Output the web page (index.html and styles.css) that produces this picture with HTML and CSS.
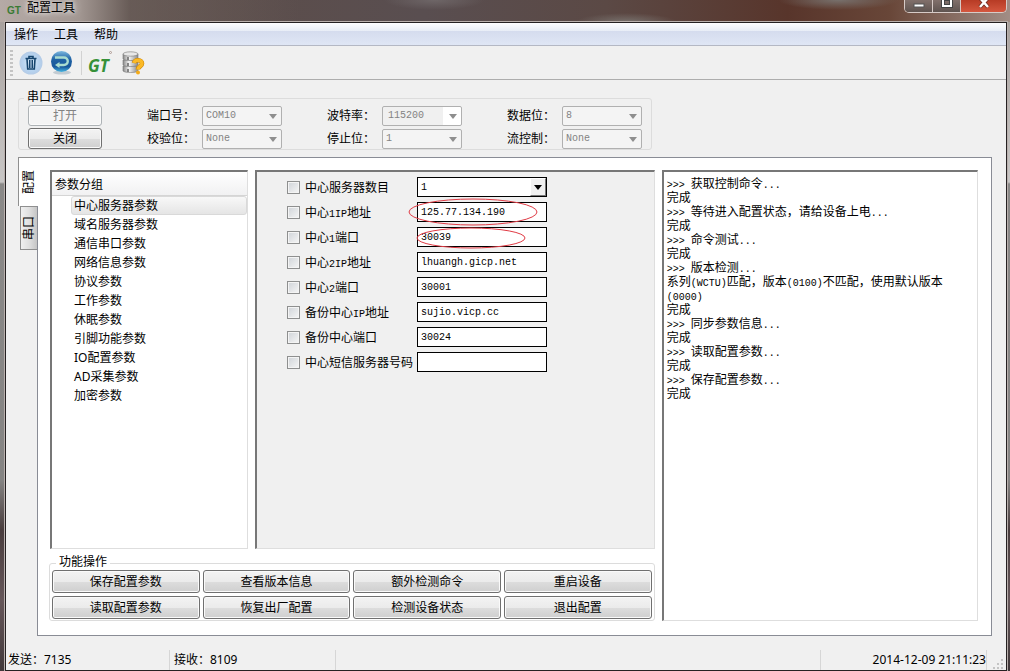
FILE: index.html
```html
<!DOCTYPE html>
<html lang="zh-CN">
<head>
<meta charset="utf-8">
<title>配置工具</title>
<link rel="stylesheet" href="styles.css">
</head>
<body>
<div class="window">
  <header class="titlebar">
    <span class="app-mark">GT</span>
    <h1 class="title">配置工具</h1>
    <div class="controls">
      <button class="control" type="button" aria-label="最小化"><svg width="14" height="12" viewBox="0 0 14 12"><rect x="2" y="4" width="10" height="3" fill="#fff" stroke="#555"/></svg></button>
      <button class="control" type="button" aria-label="最大化"><svg width="14" height="12" viewBox="0 0 14 12"><rect x="3" y="-1" width="8" height="7" fill="none" stroke="#444" stroke-width="4"/><rect x="3" y="-1" width="8" height="7" fill="none" stroke="#fff" stroke-width="2"/></svg></button>
      <button class="control close" type="button" aria-label="关闭窗口"><svg width="14" height="12" viewBox="0 0 14 12"><path d="M3-2l8 9M11-2L3 7" stroke="#6a2a22" stroke-width="4"/><path d="M3-2l8 9M11-2L3 7" stroke="#fff" stroke-width="2.5"/></svg></button>
    </div>
  </header>
  <div class="client">
    <nav class="menubar">
      <button class="menu" type="button">操作</button>
      <button class="menu" type="button">工具</button>
      <button class="menu" type="button">帮助</button>
    </nav>
    <div class="toolbar">
      <span class="grip"></span>
      <button class="tool" type="button" aria-label="清空">
        <svg width="24" height="24" viewBox="0 0 24 24"><defs><radialGradient id="pale"><stop offset="0" stop-color="#d9ebfa"/><stop offset=".7" stop-color="#b7d3ef"/><stop offset="1" stop-color="#b4cbe6"/></radialGradient></defs><circle cx="12" cy="12" r="11.500" fill="url(#pale)"/><path d="M6.500 7.500h11M10 7V5.500h4V7M8 8l.7 10h6.600L16 8" fill="none" stroke="#16456e" stroke-width="1.600"/><path d="M10.500 9v8M12 9v8M13.500 9v8" stroke="#16456e"/></svg>
      </button>
      <button class="tool" type="button" aria-label="返回">
        <svg width="24" height="24" viewBox="0 0 24 24"><defs><linearGradient id="ball" x2="0" y2="1"><stop offset="0" stop-color="#7db9e0"/><stop offset=".4" stop-color="#1f62a4"/><stop offset=".75" stop-color="#17579b"/><stop offset="1" stop-color="#49b8e4"/></linearGradient></defs><ellipse cx="12" cy="21.500" rx="9" ry="2" fill="#c2cbd2"/><circle cx="11.500" cy="10.500" r="10.500" fill="url(#ball)"/><path d="M5 6.500h9a3.500 3.500 0 0 1 0 7.500H9" fill="none" stroke="#a9dcd0" stroke-width="2.400"/><path d="M9.500 11v6L5 14z" fill="#a9dcd0"/></svg>
      </button>
      <span class="tool-split"></span>
      <button class="tool brand" type="button"><span class="brand-text">GT</span><span class="brand-dot"></span></button>
      <button class="tool" type="button" aria-label="设备帮助">
        <svg width="24" height="24" viewBox="0 0 24 24"><defs><linearGradient id="steel"><stop offset="0" stop-color="#888"/><stop offset=".4" stop-color="#f4f4f4"/><stop offset="1" stop-color="#8b8b8b"/></linearGradient></defs><g fill="url(#steel)" stroke="#777" stroke-width=".6"><path d="M2 15v5c2 2 13 2 15 0v-5z"/><path d="M2 9v5c2 2 13 2 15 0V9z"/><path d="M2 3v5c2 2 13 2 15 0V3z"/><ellipse cx="9.500" cy="3" rx="7.500" ry="2.200" fill="#e8e8e8"/></g><path d="M7 6v3M7 12v3M7 18v3" stroke="#666" stroke-width="1.500"/><path d="M13 12c1-4 8-3.500 8 .5 0 3-4 2.500-4 6" fill="none" stroke="#c98508" stroke-width="4.600"/><path d="M13 12c1-4 8-3.500 8 .5 0 3-4 2.500-4 6" fill="none" stroke="#fbb926" stroke-width="3.400"/><circle cx="17" cy="21.500" r="2" fill="#f5ab18"/></svg>
      </button>
    </div>

    <fieldset class="port">
      <legend>串口参数</legend>
      <div class="port-grid">
        <button class="btn" type="button" disabled>打开</button>
        <div class="pair"><label for="port">端口号：</label><span class="drop"><select id="port" disabled><option>COM10</option></select></span></div>
        <div class="pair"><label for="baud">波特率：</label><span class="drop editable"><select id="baud" disabled><option>115200</option></select></span></div>
        <div class="pair"><label for="bits">数据位：</label><span class="drop"><select id="bits" disabled><option>8</option></select></span></div>
        <button class="btn" type="button">关闭</button>
        <div class="pair"><label for="parity">校验位：</label><span class="drop"><select id="parity" disabled><option>None</option></select></span></div>
        <div class="pair"><label for="stop">停止位：</label><span class="drop"><select id="stop" disabled><option>1</option></select></span></div>
        <div class="pair"><label for="flow">流控制：</label><span class="drop"><select id="flow" disabled><option>None</option></select></span></div>
      </div>
    </fieldset>

    <main class="workspace">
      <div class="tabs" role="tablist">
        <button class="tab active" type="button" role="tab" aria-selected="true"><span>配置</span></button>
        <button class="tab" type="button" role="tab" aria-selected="false"><span>串口</span></button>
      </div>
      <div class="panel">
        <div class="left">
          <div class="editors">
            <section class="tree">
              <h2 class="tree-head">参数分组</h2>
              <ul class="tree-list">
                <li class="selected">中心服务器参数</li>
                <li>域名服务器参数</li>
                <li>通信串口参数</li>
                <li>网络信息参数</li>
                <li>协议参数</li>
                <li>工作参数</li>
                <li>休眠参数</li>
                <li>引脚功能参数</li>
                <li>IO配置参数</li>
                <li>AD采集参数</li>
                <li>加密参数</li>
              </ul>
            </section>
            <section class="form">
              <div class="row"><input type="checkbox" id="c1"><label for="c1">中心服务器数目</label><span class="value combo"><select aria-label="中心服务器数目"><option>1</option></select></span></div>
              <div class="row"><input type="checkbox" id="c2"><label for="c2">中心<span class="half">1IP</span>地址</label><span class="value"><input type="text" aria-label="中心1IP地址" value="125.77.134.190"><svg class="ring" width="130" height="28" viewBox="0 0 130 28"><ellipse cx="65" cy="14" rx="64" ry="13"/></svg></span></div>
              <div class="row"><input type="checkbox" id="c3"><label for="c3">中心<span class="half">1</span>端口</label><span class="value"><input type="text" aria-label="中心1端口" value="30039"><svg class="ring small" width="110" height="22" viewBox="0 0 110 22"><ellipse cx="55" cy="11" rx="54" ry="10"/></svg></span></div>
              <div class="row"><input type="checkbox" id="c4"><label for="c4">中心<span class="half">2IP</span>地址</label><span class="value"><input type="text" aria-label="中心2IP地址" value="lhuangh.gicp.net"></span></div>
              <div class="row"><input type="checkbox" id="c5"><label for="c5">中心<span class="half">2</span>端口</label><span class="value"><input type="text" aria-label="中心2端口" value="30001"></span></div>
              <div class="row"><input type="checkbox" id="c6"><label for="c6">备份中心<span class="half">IP</span>地址</label><span class="value"><input type="text" aria-label="备份中心IP地址" value="sujio.vicp.cc"></span></div>
              <div class="row"><input type="checkbox" id="c7"><label for="c7">备份中心端口</label><span class="value"><input type="text" aria-label="备份中心端口" value="30024"></span></div>
              <div class="row"><input type="checkbox" id="c8"><label for="c8">中心短信服务器号码</label><span class="value"><input type="text" aria-label="中心短信服务器号码" value=""></span></div>
            </section>
          </div>
          <fieldset class="actions">
            <legend>功能操作</legend>
            <div class="action-grid">
              <button class="btn" type="button">保存配置参数</button>
              <button class="btn" type="button">查看版本信息</button>
              <button class="btn" type="button">额外检测命令</button>
              <button class="btn" type="button">重启设备</button>
              <button class="btn" type="button">读取配置参数</button>
              <button class="btn" type="button">恢复出厂配置</button>
              <button class="btn" type="button">检测设备状态</button>
              <button class="btn" type="button">退出配置</button>
            </div>
          </fieldset>
        </div>
        <section class="log">
          <p><span class="half">&gt;&gt;&gt; </span>获取控制命令<span class="half">...</span></p>
          <p>完成</p>
          <p><span class="half">&gt;&gt;&gt; </span>等待进入配置状态，请给设备上电<span class="half">...</span></p>
          <p>完成</p>
          <p><span class="half">&gt;&gt;&gt; </span>命令测试<span class="half">...</span></p>
          <p>完成</p>
          <p><span class="half">&gt;&gt;&gt; </span>版本检测<span class="half">...</span></p>
          <p>系列<span class="half">(WCTU)</span>匹配，版本<span class="half">(0100)</span>不匹配，使用默认版本<br><span class="half">(0000)</span></p>
          <p>完成</p>
          <p><span class="half">&gt;&gt;&gt; </span>同步参数信息<span class="half">...</span></p>
          <p>完成</p>
          <p><span class="half">&gt;&gt;&gt; </span>读取配置参数<span class="half">...</span></p>
          <p>完成</p>
          <p><span class="half">&gt;&gt;&gt; </span>保存配置参数<span class="half">...</span></p>
          <p>完成</p>
        </section>
      </div>
    </main>

    <footer class="status">
      <span class="cell">发送：7135</span>
      <span class="cell">接收：8109</span>
      <span class="cell wide"></span>
      <span class="cell clock">2014-12-09 21:11:23</span>
      <svg class="size-grip" width="12" height="12" viewBox="0 0 12 12"><path d="M9 1h2v2H9zM9 5h2v2H9zM9 9h2v2H9zM5 5h2v2H5zM5 9h2v2H5zM1 9h2v2H1z" fill="#c4c4c4"/></svg>
    </footer>
  </div>
</div>
</body>
</html>
```
FILE: styles.css
```css
*, *::before, *::after { box-sizing: border-box; }
body {
  margin: 0;
  font: 12px/14px "Noto Sans", "Noto Sans CJK SC", sans-serif;
  color: #000;
}
button, select, input { font: inherit; color: inherit; margin: 0; }
h1, h2, p, ul { margin: 0; padding: 0; font-size: 12px; font-weight: normal; }
legend, .port, .form, .log, .actions { font-family: "Liberation Mono", "Noto Sans CJK SC", monospace; }
.half { font-size: 10px; line-height: 10px; white-space: pre; }

/* Window frame */
.window {
  min-height: 100vh;
  display: flex;
  flex-direction: column;
  padding: 0 3px 0 5px;
  background:
    linear-gradient(90deg, #b5aaa6 0, #a19691 80px, rgba(110, 100, 96, .6) 130px, transparent 300px) 0 0 / 100% 22px no-repeat,
    radial-gradient(ellipse 50px 9px at 62% 100%, #77706c, transparent) 0 0 / 100% 22px no-repeat,
    radial-gradient(ellipse 60px 10px at 83% 0, #77706c, transparent) 0 0 / 100% 22px no-repeat,
    radial-gradient(ellipse 50px 10px at 43% 0, #6e6667, transparent) 0 0 / 100% 22px no-repeat,
    linear-gradient(90deg, #5f4d45 0, #594e50 42%, #5b4945 60%, #58352b 78%, #684638 88%, #a18d85 100%) 0 0 / 100% 22px no-repeat,
    linear-gradient(#a29b98 0, #b9b5b3 100px, #c8c6c5 182px, #8a8988 184px, #858483 480px, #493d3e 530px, #66575a 600px, #41383a 100%);
}
.titlebar { height: 21px; display: flex; align-items: flex-start; }
.app-mark {
  width: 16px;
  padding: 4px 0 0 2px;
  font: bold 10px/13px "Liberation Sans", sans-serif;
  color: #397b34;
}
.title {
  flex: 1;
  padding: 1px 0 0 6px;
  line-height: 14px;
  text-shadow: 0 0 5px #fff, 0 0 9px #ddd;
}
.controls {
  display: flex;
  border: 1px solid #d7cbc7;
  border-top: 0;
  border-radius: 0 0 5px 5px;
  overflow: hidden;
  height: 13px;
}
.control {
  width: 28px;
  height: 12px;
  padding: 0;
  border: 0;
  border-right: 1px solid #d7cbc7;
  background: linear-gradient(#81706b, #5f5450);
  display: flex;
  justify-content: center;
}
.control.close { width: 45px; border-right: 0; background: linear-gradient(#b73b25, #d4573f); }
.client {
  flex: 1;
  display: flex;
  flex-direction: column;
  border: 1px solid #252122;
  background: #f0f0f0;
  box-shadow: 0 0 0 1px #b9b0ad;
  margin-top: 1px;
}

/* Menu and toolbar */
.menubar {
  display: flex;
  height: 23px;
  padding-left: 8px;
  gap: 16px;
  border-bottom: 1px solid #b4b8c4;
  background: linear-gradient(#fdfdff 0, #e8edf6 35%, #d5dcee 38%, #dfe6f5 100%);
}
.menu { border: 0; padding: 2px 0 0; background: none; }
.toolbar {
  display: flex;
  align-items: center;
  height: 34px;
  padding: 0 4px;
  border-bottom: 1px solid #adadad;
}
.grip {
  width: 3px;
  height: 26px;
  margin-right: 6px;
  background: repeating-linear-gradient(#c4c4c4 0 2px, transparent 2px 4px);
}
.tool { padding: 0; border: 0; background: none; height: 24px; margin-right: 7px; display: flex; }
.tool-split { width: 1px; height: 24px; margin-right: 6px; background: #d2d2d2; }
.brand { width: 25px; margin-right: 8px; }
.brand-text { font: italic bold 17px/30px "Open Sans", sans-serif; color: #359038; }
.brand-dot { width: 3px; height: 3px; border: 1px solid #b09b94; border-radius: 50%; }

/* Buttons and boxes */
fieldset { margin: 0; min-width: 0; border: 1px solid #dcdcdc; border-radius: 3px; }
legend { padding: 0 3px; }
.btn {
  padding: 2px 0 0;
  border: 1px solid #707070;
  border-radius: 3px;
  background: linear-gradient(#f3f3f3, #ebebeb 50%, #dddddd 51%, #cfcfcf);
  box-shadow: inset 0 0 0 1px #fafafa;
}
.btn:disabled { border-color: #adb2b5; background: #f4f4f4; color: #838383; }
.port {
  align-self: flex-start;
  margin: 11px 0 7px 12px;
  padding: 0 9px 0;
}
.port legend { margin-left: -4px; }
.port-grid {
  display: grid;
  grid-template-columns: 74px repeat(3, 135px);
  grid-auto-rows: 21px;
  gap: 2px 45px;
}
.pair { display: flex; align-items: center; }
.pair label { width: 55px; padding-top: 3px; }
.drop { position: relative; flex: 1; display: flex; height: 20px; }
.drop select {
  appearance: none;
  width: 100%;
  padding: 0 3px;
  border: 1px solid #b0b0b0;
  border-radius: 2px;
  background: #f4f4f4;
  color: #838383;
  font-size: 10px;
  opacity: 1;
}
.drop.editable select { padding-left: 5px; background: linear-gradient(90deg, #f0f0f0 60px, #fff 60px); }
.drop::after, .combo::after {
  content: "";
  position: absolute;
  right: 5px;
  top: 8px;
  border: 4px solid transparent;
  border-top: 5px solid #8e8e8e;
  border-bottom: 0;
  pointer-events: none;
}

/* Tabs and main panel */
.workspace { flex: 1; display: flex; padding: 0 14px 0 11px; }
.tabs { width: 20px; display: flex; flex-direction: column; align-items: flex-end; }
.tab {
  width: 17px;
  height: 44px;
  padding: 0;
  border: 1px solid #8f8f8f;
  border-right: 0;
  background: linear-gradient(90deg, #f0f0f0, #e0e0e0 50%, #c5c5c5);
  display: flex;
  align-items: center;
  justify-content: center;
}
.tab.active {
  width: 20px;
  height: 49px;
  margin-right: -1px;
  border-bottom: 0;
  background: #fff;
  z-index: 1;
}
.tab span { writing-mode: vertical-rl; text-orientation: sideways; transform: rotate(180deg); }
.panel {
  flex: 1;
  display: grid;
  grid-template-columns: minmax(0, 607fr) minmax(0, 317fr);
  gap: 7px;
  padding: 12px 13px 14px 11px;
  border: 1px solid #898c95;
  background: #fff;
}
.left { display: flex; flex-direction: column; gap: 7px; }
.editors { flex: 1; display: grid; grid-template-columns: 198px minmax(0, 1fr); gap: 7px; margin-left: 1px; }
.tree, .form, .log {
  border: 1px solid #dedede;
  border-top: 2px solid #777;
  border-left: 2px solid #777;
}
.tree-head {
  height: 24px;
  padding: 6px 3px 4px;
  border-bottom: 1px solid #d5d5d5;
  background: linear-gradient(#fff, #f1f1f2);
}
.tree-list { list-style: none; padding: 0 0 0 19px; }
.tree-list li { height: 19px; padding: 0 2px; line-height: 17px; border: 1px solid transparent; }
.tree-list .selected { border-color: #d9d9d9; border-radius: 3px; background: linear-gradient(#f8f8f8, #e5e5e5); }
.form { padding: 5px 0 0 30px; background: #f0f0f0; display: flex; flex-direction: column; gap: 5px; }
.row { display: flex; align-items: center; height: 20px; }
.row input[type="checkbox"] {
  appearance: none;
  width: 13px;
  height: 13px;
  border: 1px solid #8e8f8f;
  background: linear-gradient(135deg, #cfd3d8, #f6f6f6);
  box-shadow: inset 0 0 0 1px #f4f4f4;
}
.row label { width: 117px; padding: 3px 0 0 5px; white-space: nowrap; }
.value { position: relative; width: 130px; height: 20px; display: flex; }
.value input, .value select {
  appearance: none;
  width: 100%;
  padding: 1px 3px 0;
  border: 1px solid #000;
  border-radius: 0;
  background: #fff;
  font-size: 10px;
}
.combo::before {
  content: "";
  position: absolute;
  right: 1px;
  top: 1px;
  width: 16px;
  height: 18px;
  background: #f0f0f0;
  border: 1px solid;
  border-color: #fff #777 #777 #fff;
  pointer-events: none;
}
.combo::after { border-top-color: #000; }
.ring { position: absolute; left: -9px; top: -4px; fill: none; stroke: #e03a44; pointer-events: none; }
.ring.small { left: -1px; top: 0; }
.actions { padding: 0 2px 1px; }
.actions legend { margin-left: 4px; }
.action-grid {
  display: grid;
  grid-template-columns: repeat(4, minmax(0, 1fr));
  grid-auto-rows: 23px;
  gap: 3px;
}
.log { padding: 6px 3px 5px; }

/* Status bar */
.status {
  display: flex;
  align-items: flex-end;
  height: 34px;
  padding: 0 2px 0 0;
}
.cell { width: 166px; height: 20px; padding: 3px 4px; border-right: 1px solid #d6d6d6; white-space: nowrap; }
.cell:first-child { width: 164px; padding-left: 2px; }
.cell.wide { flex: 1; }
.cell.clock { padding: 3px 0; text-align: right; }
.size-grip { margin-left: 5px; }
```
